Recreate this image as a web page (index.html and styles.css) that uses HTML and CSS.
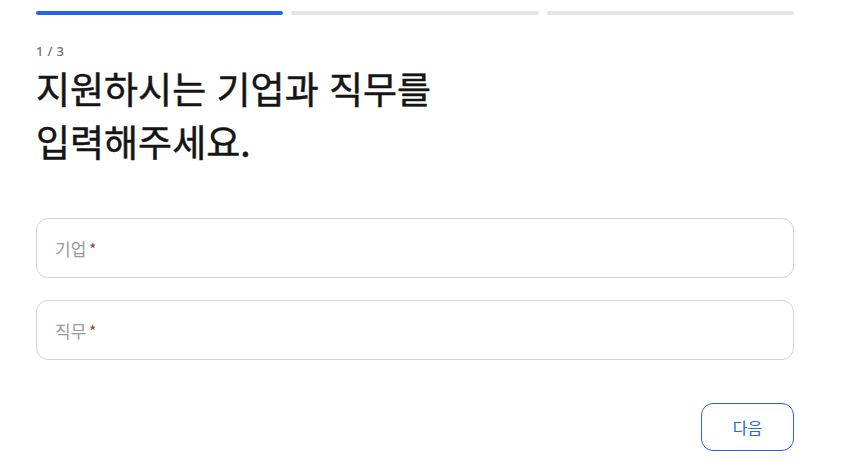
FILE: index.html
```html
<!DOCTYPE html>
<html lang="ko">
<head>
<meta charset="utf-8">
<link rel="stylesheet" href="styles.css">
</head>
<body>
<div class="page">
  <div class="progress">
    <div class="seg active"></div>
    <div class="seg"></div>
    <div class="seg"></div>
  </div>
  <div class="step">1 / 3</div>
  <h1 class="title">지원하시는 기업과 직무를<br>입력해주세요.</h1>
  <div class="fields">
    <div class="field"><span class="label">기업</span><span class="req">*</span></div>
    <div class="field"><span class="label">직무</span><span class="req">*</span></div>
  </div>
  <div class="actions">
    <button class="next">다음</button>
  </div>
</div>
</body>
</html>
```
FILE: styles.css
```css
html, body {
  margin: 0;
  padding: 0;
  background: #ffffff;
}
body {
  font-family: "Noto Sans CJK KR", "Noto Sans", sans-serif;
  color: #1a1a1a;
}
.page {
  width: 758px;
  margin: 0 0 0 36px;
  padding-top: 11px;
}
.progress {
  display: flex;
  gap: 8px;
}
.seg {
  flex: 1;
  height: 4px;
  border-radius: 2px;
  background: #e5e5e5;
}
.seg.active {
  background: #2563eb;
}
.step {
  margin-top: 28px;
  font-size: 13px;
  font-weight: 500;
  color: #6f6f6f;
  line-height: 16px;
  letter-spacing: 0.3px;
  font-family: "Noto Sans", sans-serif;
}
.title {
  margin: 3px 0 0 0;
  font-size: 37px;
  font-weight: 400;
  line-height: 53px;
  letter-spacing: 0;
  color: #151515;
  -webkit-text-stroke: 0.5px #151515;
}
.fields {
  margin-top: 50px;
  display: flex;
  flex-direction: column;
  gap: 22px;
}
.field {
  height: 58px;
  border: 1px solid #d4d4d4;
  border-radius: 12px;
  display: flex;
  align-items: center;
  padding-left: 18px;
  font-size: 17px;
}
.label {
  color: #9a9a9a;
}
.req {
  color: #a0342f;
  margin-left: 3px;
  font-size: 15px;
}
.actions {
  display: flex;
  justify-content: flex-end;
  margin-top: 43px;
}
.next {
  width: 93px;
  height: 48px;
  border: 1px solid #2563eb;
  border-radius: 12px;
  background: #fff;
  color: #2563eb;
  font-family: "Noto Sans CJK KR", sans-serif;
  font-size: 16px;
}
```
